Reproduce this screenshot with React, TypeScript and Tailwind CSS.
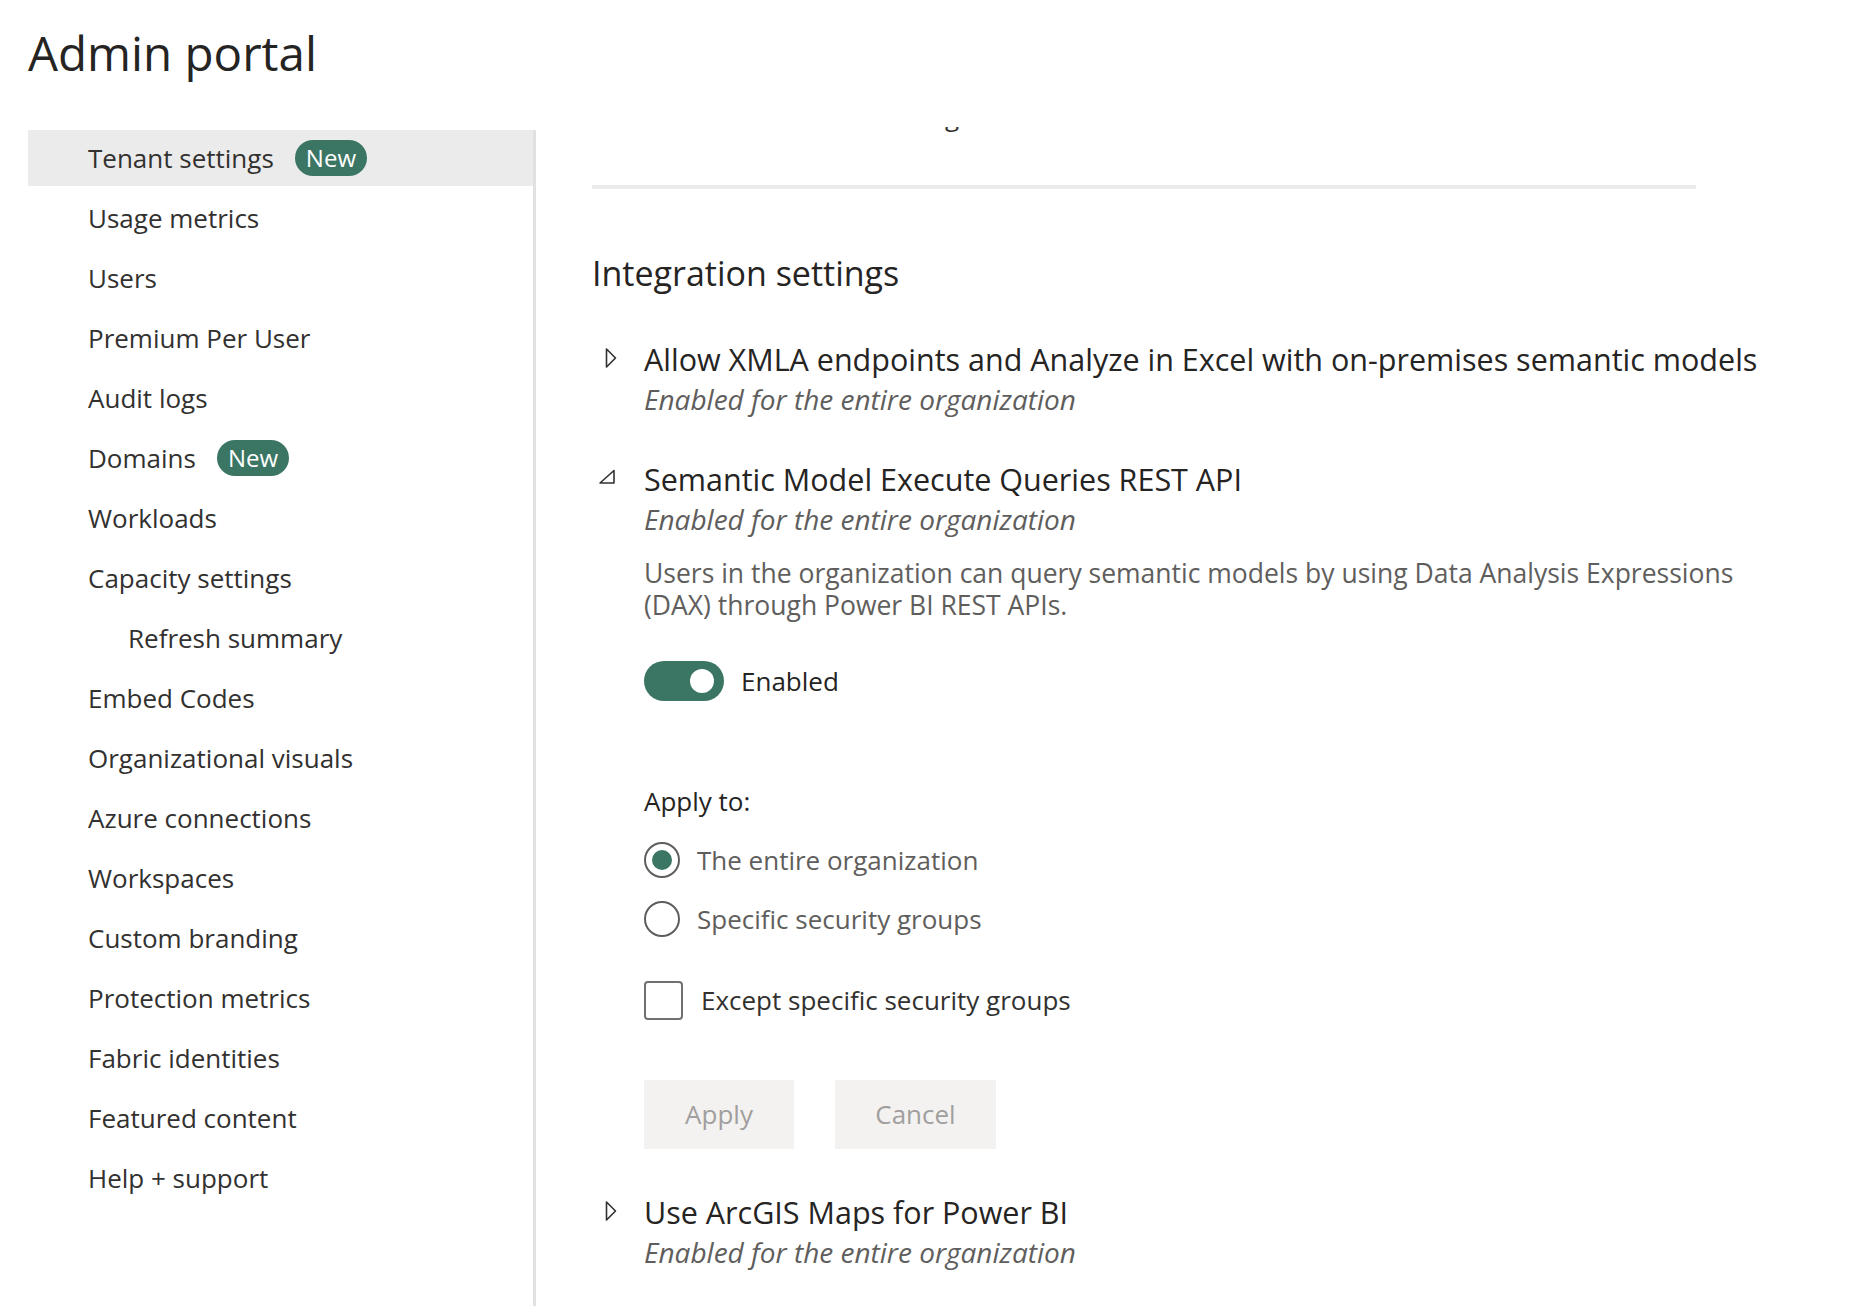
const navItems: { label: string; isNew?: boolean; indent?: boolean }[] = [
  { label: "Tenant settings", isNew: true },
  { label: "Usage metrics" },
  { label: "Users" },
  { label: "Premium Per User" },
  { label: "Audit logs" },
  { label: "Domains", isNew: true },
  { label: "Workloads" },
  { label: "Capacity settings" },
  { label: "Refresh summary", indent: true },
  { label: "Embed Codes" },
  { label: "Organizational visuals" },
  { label: "Azure connections" },
  { label: "Workspaces" },
  { label: "Custom branding" },
  { label: "Protection metrics" },
  { label: "Fabric identities" },
  { label: "Featured content" },
  { label: "Help + support" },
];

function NewBadge() {
  return (
    <span className="ml-[21px] inline-flex h-[36px] items-center rounded-full bg-[#3b7664] px-[11px] text-[24px] leading-none text-white">
      New
    </span>
  );
}

function ChevronRight() {
  return (
    <svg width="14" height="22" viewBox="0 0 14 22" fill="none">
      <path d="M2.5 2 L11.5 11 L2.5 20 Z" stroke="#323130" strokeWidth="1.6" strokeLinejoin="round" />
    </svg>
  );
}

function ChevronDown() {
  return (
    <svg width="20" height="18" viewBox="0 0 20 18" fill="none">
      <path d="M17 2.5 L17 15 L3 15 Z" stroke="#323130" strokeWidth="1.6" strokeLinejoin="round" />
    </svg>
  );
}

function SettingHeader({ title, open, mt }: { title: string; open?: boolean; mt: string }) {
  return (
    <div className={`flex ${mt}`}>
      <div className="flex h-[40px] w-[52px] items-center">
        {open ? (
          <div className="ml-[5px] -mt-[4px]">
            <ChevronDown />
          </div>
        ) : (
          <div className="ml-[12px] -mt-[3px]">
            <ChevronRight />
          </div>
        )}
      </div>
      <div>
        <div className="text-[30.5px] leading-[40px] text-[#252423]">{title}</div>
        <div className="text-[28px] italic leading-[40px] text-[#605e5c]">Enabled for the entire organization</div>
      </div>
    </div>
  );
}

export default function App() {
  return (
    <div
      className="flex h-[1306px] w-[1864px] flex-col overflow-hidden bg-white px-[28px]"
      style={{ fontFamily: '"Open Sans", "Noto Sans", sans-serif' }}
    >
      <h1 className="pt-[20px] text-[47.5px] leading-[66px] text-[#252423]">Admin portal</h1>

      <div className="mt-[32px] flex flex-1">
        {/* sidebar */}
        <div className="mt-[12px] flex w-[508px] flex-col gap-[4px] border-r-[3px] border-[#e1e1e1]">
          {navItems.map((item) => (
            <div
              key={item.label}
              className={`flex h-[56px] items-center text-[26px] text-[#323130] ${
                item.indent ? "pl-[100px]" : "pl-[60px]"
              } ${item.label === "Tenant settings" ? "bg-[#ebebeb]" : ""}`}
            >
              <span>{item.label}</span>
              {item.isNew && <NewBadge />}
            </div>
          ))}
        </div>

        {/* main */}
        <div className="ml-[56px] flex flex-col">
          <div className="mt-[9px] h-[6px] overflow-hidden">
            <div className="-mt-[27px] ml-[353px] text-[26px] leading-[32px] text-[#323130]">g</div>
          </div>
          <div className="mt-[52px] h-[4px] w-[1104px] bg-[#ebebeb]" />

          <h2 className="mt-[60px] text-[34px] leading-[48px] text-[#252423]">Integration settings</h2>

          <SettingHeader
            mt="mt-[42px]"
            title="Allow XMLA endpoints and Analyze in Excel with on-premises semantic models"
          />
          <SettingHeader mt="mt-[40px]" title="Semantic Model Execute Queries REST API" open />

          <div className="ml-[52px] flex flex-col">
            <p className="mt-[18px] text-[26.5px] leading-[32px] text-[#605e5c]">
              Users in the organization can query semantic models by using Data Analysis Expressions
              <br />
              (DAX) through Power BI REST APIs.
            </p>

            <div className="mt-[40px] flex h-[40px] items-center">
              <div className="flex h-[40px] w-[80px] items-center justify-end rounded-full bg-[#3b7664] pr-[10px]">
                <div className="h-[24px] w-[24px] rounded-full bg-white" />
              </div>
              <span className="ml-[17px] text-[26px] text-[#252423]">Enabled</span>
            </div>

            <div className="mt-[80px] text-[26px] leading-[40px] text-[#252423]">Apply to:</div>

            <div className="mt-[19px] flex h-[40px] items-center">
              <div className="flex h-[36px] w-[36px] items-center justify-center rounded-full border-2 border-[#605e5c]">
                <div className="h-[20px] w-[20px] rounded-full bg-[#3b7664]" />
              </div>
              <span className="ml-[17px] text-[26px] text-[#605e5c]">The entire organization</span>
            </div>
            <div className="mt-[19px] flex h-[40px] items-center">
              <div className="h-[36px] w-[36px] rounded-full border-2 border-[#605e5c]" />
              <span className="ml-[17px] text-[26px] text-[#605e5c]">Specific security groups</span>
            </div>

            <div className="mt-[41px] flex h-[40px] items-center">
              <div className="h-[39px] w-[39px] rounded-[4px] border-2 border-[#707070]" />
              <span className="ml-[18px] text-[26px] text-[#323130]">Except specific security groups</span>
            </div>

            <div className="mt-[60px] flex gap-[41px]">
              <button className="h-[69px] w-[150px] bg-[#f3f2f1] text-[26px] text-[#a19f9d]">Apply</button>
              <button className="h-[69px] w-[161px] bg-[#f3f2f1] text-[26px] text-[#a19f9d]">Cancel</button>
            </div>
          </div>

          <SettingHeader mt="mt-[43px]" title="Use ArcGIS Maps for Power BI" />
        </div>
      </div>
    </div>
  );
}
